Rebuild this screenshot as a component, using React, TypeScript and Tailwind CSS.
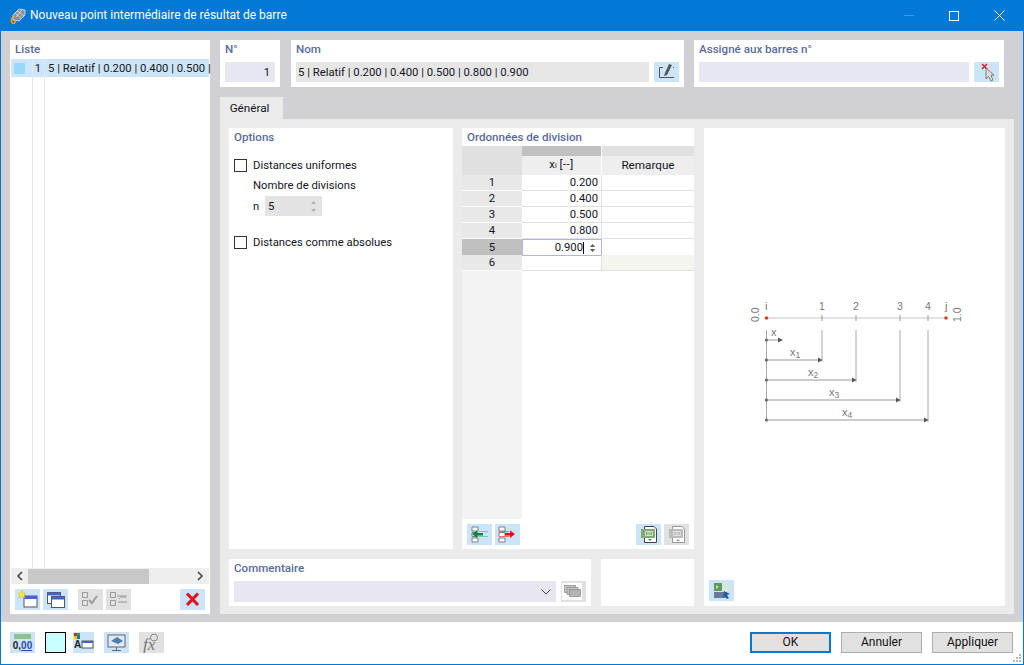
import type { ReactNode } from "react";

const font = "font-['Roboto','Liberation_Sans',sans-serif]";

const rows = [
  { n: 1, v: "0.200" },
  { n: 2, v: "0.400" },
  { n: 3, v: "0.500" },
  { n: 4, v: "0.800" },
];

const Label = ({ children }: { children: ReactNode }) => (
  <p className="text-[11.6px] leading-[16px] font-medium text-[#5b6b9b]">{children}</p>
);

const IconBtn = ({ children, off }: { children: ReactNode; off?: boolean }) => (
  <div className={`w-[25px] h-[21px] flex items-center justify-center shrink-0 ${off ? "bg-[#e1e1e1]" : "bg-[#cce4f7]"}`}>
    <svg width="25" height="21" viewBox="0 0 25 21">{children}</svg>
  </div>
);

const Win = ({ x, y, w = 13, h = 11 }: { x: number; y: number; w?: number; h?: number }) => (
  <g>
    <rect x={x} y={y} width={w} height={h} fill="#fff" stroke="#555" strokeWidth="1" />
    <rect x={x} y={y} width={w} height="3" fill="#4a63c8" />
  </g>
);

const Checkbox = () => <div className="w-[13px] h-[13px] border border-[#333] bg-white shrink-0" />;

const Diagram = () => {
  const ticks = [
    { x: 82, y: 70, l: "1", tx: 50 },
    { x: 116, y: 90, l: "2", tx: 68 },
    { x: 160, y: 110, l: "3", tx: 89 },
    { x: 188, y: 130, l: "4", tx: 102 },
  ];
  return (
    <svg width="230" height="140" viewBox="0 0 230 140" className="font-['Liberation_Sans',sans-serif]">
      <line x1="26" y1="28" x2="206" y2="28" stroke="#c4c4c4" />
      <circle cx="26.5" cy="28" r="1.8" fill="#d8401c" />
      <circle cx="206" cy="28" r="1.8" fill="#d8401c" />
      <text x="25" y="20" fontSize="11" fill="#777">i</text>
      <text x="205" y="20" fontSize="11" fill="#777">j</text>
      <text transform="translate(19 32) rotate(-90)" fontSize="10.5" fill="#777">0.0</text>
      <text transform="translate(221 32) rotate(-90)" fontSize="10.5" fill="#777">1.0</text>
      <line x1="26.5" y1="40" x2="26.5" y2="130" stroke="#aaa" />
      <circle cx="26.5" cy="50" r="1.6" fill="#555" />
      <line x1="26" y1="50" x2="40" y2="50" stroke="#999" />
      <path d="M38 47.5 L43 50 L38 52.5 Z" fill="#555" />
      <text x="31" y="46" fontSize="11" fill="#777">x</text>
      {ticks.map((t) => (
        <g key={t.l}>
          <line x1={t.x} y1="25" x2={t.x} y2="31" stroke="#999" />
          <text x={t.x - 3} y="20" fontSize="10.5" fill="#777">{t.l}</text>
          <line x1={t.x} y1="40" x2={t.x} y2={t.y + 2} stroke="#aaa" />
          <circle cx="26.5" cy={t.y} r="1.6" fill="#555" />
          <line x1="26" y1={t.y} x2={t.x - 3} y2={t.y} stroke="#999" />
          <path d={`M${t.x - 4} ${t.y - 2.5} L${t.x + 0.5} ${t.y} L${t.x - 4} ${t.y + 2.5} Z`} fill="#555" />
          <text x={t.tx} y={t.y - 4} fontSize="11" fill="#777">
            x<tspan fontSize="8.5" dy="2">{t.l}</tspan>
          </text>
        </g>
      ))}
    </svg>
  );
};

export default function App() {
  return (
    <div className={`w-[1024px] h-[665px] flex flex-col bg-white border-x border-b border-[#0078d7] text-[11.3px] leading-[15px] text-[#14141e] overflow-hidden ${font}`}>
      {/* title bar */}
      <div className="h-[31px] bg-[#0078d7] flex items-center shrink-0 text-white">
        <svg width="18" height="18" viewBox="0 0 18 18" className="ml-[8px]">
          <path d="M4 8 L10 2 L16 3 L16 8 L10 14 L4 13 Z" fill="#8a8f98" stroke="#e4e4e4" strokeWidth="0.8" />
          <path d="M6 6 L12 11 M8 4 L15 9 M7 10 L13 3" stroke="#eee" strokeWidth="0.7" />
          <text x="1" y="17" fontSize="10" fontWeight="700" fill="#f0a020">6</text>
        </svg>
        <span className="ml-[3px] text-[12px]">Nouveau point intermédiaire de résultat de barre</span>
        <div className="ml-auto flex items-center">
          <div className="w-[10px] h-px bg-[#3f9be4] mr-[35px]" />
          <div className="w-[10px] h-[10px] border border-white mr-[35px]" />
          <svg width="11" height="11" viewBox="0 0 11 11" className="mr-[18px]">
            <path d="M0.5 0.5 L10.5 10.5 M10.5 0.5 L0.5 10.5" stroke="#fff" strokeWidth="1" />
          </svg>
        </div>
      </div>

      {/* body */}
      <div className="h-[591px] bg-[#d1d0d5] flex gap-[10px] pt-[9px] pl-[9px] pr-[9px] pb-[8px] shrink-0">
        {/* list */}
        <div className="w-[200px] bg-white flex flex-col px-px">
          <div className="pl-[4px] pt-[1px] h-[19px]"><Label>Liste</Label></div>
          <div className="flex-1 relative">
            <div className="h-[18px] bg-[#cce5f8] flex items-center relative">
              <div className="w-[11px] h-[11px] bg-[#97d9f8] ml-[3px] shrink-0" />
              <span className="w-[13px] ml-[3px] text-right shrink-0">1</span>
              <span className="ml-[7px] whitespace-nowrap">5 | Relatif | 0.200 | 0.400 | 0.500 |</span>
            </div>
            <div className="absolute left-[21px] top-0 bottom-0 w-px bg-[#e6e6e6]" />
            <div className="absolute left-[33px] top-0 bottom-0 w-px bg-[#e6e6e6]" />
          </div>
          <div className="h-[16px] bg-[#eeeeee] flex items-center shrink-0">
            <svg width="17" height="16" viewBox="0 0 17 16"><path d="M11 4 L7 8 L11 12" fill="none" stroke="#444" strokeWidth="1.6" /></svg>
            <div className="w-[121px] h-[15px] bg-[#c8c8c8]" />
            <svg width="17" height="16" viewBox="0 0 17 16" className="ml-auto"><path d="M6 4 L10 8 L6 12" fill="none" stroke="#444" strokeWidth="1.6" /></svg>
          </div>
          <div className="h-[30px] flex items-start pt-[5px] pl-[4px] shrink-0">
            <IconBtn>
              <Win x={9} y={7} />
              <path d="M7 1 L8.2 4 L11 4 L9 6 L10 9 L7 7.5 L4 9 L5 6 L3 4 L5.8 4 Z" fill="#ffe92e" stroke="#c9b000" strokeWidth="0.4" />
            </IconBtn>
            <div className="w-[3px]" />
            <IconBtn>
              <Win x={4.5} y={3.5} />
              <Win x={8.5} y={7.5} />
            </IconBtn>
            <div className="w-[10px]" />
            <IconBtn off>
              <path d="M4.5 3.5h5v5h-5z M4.5 11.5h5v5h-5z" fill="none" stroke="#999" />
              <path d="M11 11 L14 14 L19 7" fill="none" stroke="#999" strokeWidth="1.8" />
            </IconBtn>
            <div className="w-[3px]" />
            <IconBtn off>
              <path d="M4.5 3.5h5v5h-5z M4.5 11.5h5v5h-5z" fill="none" stroke="#999" />
              <path d="M11 7 H21 M12 13 H21 M13 10 Q16 6 20 9" fill="none" stroke="#999" />
            </IconBtn>
            <div className="w-[49px]" />
            <IconBtn>
              <path d="M7 4.5 L18 16 M18 4.5 L7 16" stroke="#e8141c" strokeWidth="3.2" />
            </IconBtn>
          </div>
        </div>

        {/* right column */}
        <div className="w-[794px] flex flex-col">
          <div className="flex h-[47px] shrink-0">
            <div className="w-[60px] bg-white pl-[5px] pr-[5px] pt-[1px]">
              <Label>N°</Label>
              <div className="mt-[5px] h-[20px] bg-[#e7e7f1] flex items-center justify-end pr-[5px]">1</div>
            </div>
            <div className="w-[393px] ml-[11px] bg-white pl-[5px] pr-[5px] pt-[1px]">
              <Label>Nom</Label>
              <div className="mt-[5px] flex gap-[5px]">
                <div className="w-[353px] h-[20px] bg-[#e6e6e6] flex items-center pl-[2px] whitespace-nowrap">5 | Relatif | 0.200 | 0.400 | 0.500 | 0.800 | 0.900</div>
                <div className="h-[20px] overflow-hidden">
                  <IconBtn>
                    <path d="M9 5.5 H5.5 V15.5 H20 M20 5.5 H19" fill="none" stroke="#555" />
                    <path d="M15 2 L18 3 L13 13 L10 14 L11 11 Z" fill="#555" />
                  </IconBtn>
                </div>
              </div>
            </div>
            <div className="w-[310px] ml-[10px] bg-white pl-[5px] pr-[5px] pt-[1px]">
              <Label>Assigné aux barres n°</Label>
              <div className="mt-[5px] flex gap-[5px]">
                <div className="w-[270px] h-[20px] bg-[#e7e7f1]" />
                <div className="h-[20px] overflow-hidden">
                  <IconBtn>
                    <path d="M8 2 L13 7 M13 2 L8 7" stroke="#e8141c" strokeWidth="1.5" />
                    <path d="M12 6 L12 17 L14.5 14.5 L17 19 L19 18 L17 13.5 L20 13 Z" fill="#ddd" stroke="#666" strokeWidth="0.8" />
                  </IconBtn>
                </div>
              </div>
            </div>
          </div>

          <div className="mt-[10px] w-[63px] h-[22px] bg-[#ebebeb] flex items-center justify-center shrink-0 text-[11.7px] pr-[4px]">Général</div>

          <div className="flex-1 bg-[#ebebeb] pt-[9px] pl-[9px] pb-[8px] flex gap-[10px]">
            <div className="w-[465px] flex flex-col gap-[10px]">
              <div className="h-[421px] flex gap-[9px]">
                {/* options */}
                <div className="w-[224px] bg-white pl-[5px] pt-[1px]">
                  <Label>Options</Label>
                  <div className="mt-[12px] flex items-center gap-[6px] h-[16px]">
                    <Checkbox />
                    <span>Distances uniformes</span>
                  </div>
                  <p className="mt-[5px] ml-[19px] h-[16px] leading-[16px]">Nombre de divisions</p>
                  <div className="mt-[2px] ml-[19px] flex items-center h-[20px]">
                    <span className="w-[12px]">n</span>
                    <div className="w-[57px] h-[20px] bg-[#e3e3e3] flex items-center pl-[3px] justify-between pr-[5px]">
                      5
                      <svg width="7" height="13" viewBox="0 0 7 13"><path d="M3.5 1 L6 4 H1 Z M3.5 12 L6 9 H1 Z" fill="#b0b0b0" /></svg>
                    </div>
                  </div>
                  <div className="mt-[18px] flex items-center gap-[6px] h-[16px]">
                    <Checkbox />
                    <span>Distances comme absolues</span>
                  </div>
                </div>

                {/* table */}
                <div className="w-[232px] bg-white flex flex-col">
                  <div className="h-[18px] pl-[5px] pt-[1px]"><Label>Ordonnées de division</Label></div>
                  <div className="grid grid-cols-[60px_80px_92px] h-[10px] shrink-0">
                    <div className="bg-[#e0e0e0]" />
                    <div className="bg-[#c0c0c0] border-r border-white" />
                    <div className="bg-[#e0e0e0]" />
                  </div>
                  <div className="grid grid-cols-[60px_80px_92px] h-[19px] shrink-0">
                    <div className="bg-[#e0e0e0]" />
                    <div className="bg-[#eeeeee] border-r border-white flex items-center justify-center">
                      <span>x<span className="text-[7px]">i</span> <span className="tracking-[0.5px]">[--]</span></span>
                    </div>
                    <div className="bg-[#eeeeee] flex items-center justify-center text-[11.7px]">Remarque</div>
                  </div>
                  {rows.map((r) => (
                    <div key={r.n} className="grid grid-cols-[60px_80px_92px] h-[16px] shrink-0">
                      <div className="bg-[#e8e8e8] border-b border-white flex items-center justify-center">{r.n}</div>
                      <div className="border-b border-r border-[#e0e0e0] flex items-center justify-end pr-[3px]">{r.v}</div>
                      <div className="border-b border-[#e0e0e0]" />
                    </div>
                  ))}
                  <div className="grid grid-cols-[60px_80px_92px] h-[16px] shrink-0">
                    <div className="bg-[#c0c0c0] flex items-center justify-center">5</div>
                    <div className="border border-[#a9b4f0] flex items-center justify-end pr-[5px] gap-[3px]">
                      <span>0.900</span>
                      <div className="w-px h-[12px] bg-black -ml-[3px]" />
                      <svg width="7" height="10" viewBox="0 0 7 10" className="ml-[2px]"><path d="M3.5 1 L6 4 H1 Z M3.5 9 L6 6 H1 Z" fill="#555" /></svg>
                    </div>
                    <div className="border-b border-[#e0e0e0]" />
                  </div>
                  <div className="grid grid-cols-[60px_80px_92px] h-[16px] shrink-0">
                    <div className="bg-[#e8e8e8] border-b border-white flex items-center justify-center">6</div>
                    <div className="border-b border-r border-[#e0e0e0]" />
                    <div className="bg-[#f5f5ef] border-b border-[#e0e0e0]" />
                  </div>
                  <div className="flex-1 min-h-0">
                    <div className="w-[60px] h-full bg-[#f3f3f3]" />
                  </div>
                  <div className="h-[30px] flex items-start pt-[5px] px-[5px] shrink-0">
                    <IconBtn>
                      <path d="M5 3h6v4H5z M5 8.5h6v4H5z M5 14h6v4H5z" fill="#fff" stroke="#666" strokeWidth="0.8" />
                      <path d="M12 7.5 H21 M12 12.5 H21" stroke="#6fcfa0" />
                      <path d="M5 10 L10 6.5 V9 H16 V11.5 H10 V14 Z" fill="#0a8a3c" />
                    </IconBtn>
                    <div className="w-[3px]" />
                    <IconBtn>
                      <path d="M4 3h6v4H4z M4 8.5h6v4H4z M4 14h6v4H4z" fill="#fff" stroke="#666" strokeWidth="0.8" />
                      <path d="M4 7.5 H14 M4 12.5 H14" stroke="#e87070" />
                      <path d="M20 10 L15 6.5 V9 H10 V11.5 H15 V14 Z" fill="#f00" />
                    </IconBtn>
                    <div className="ml-auto flex gap-[3px]">
                      <IconBtn>
                        <path d="M8.5 2.5 H18 L20.5 5 V18.5 H8.5 Z" fill="#fff" stroke="#444" />
                        <rect x="5" y="5" width="14" height="9" fill="#86a878" />
                        <path d="M9.5 7.5h7v4h-7z M12 7.5v4 M14 7.5v4" fill="none" stroke="#dfe" strokeWidth="0.7" />
                        <path d="M12 15 H16 L14 17 Z" fill="#4a8a4a" />
                      </IconBtn>
                      <IconBtn off>
                        <path d="M8.5 2.5 H18 L20.5 5 V18.5 H8.5 Z" fill="#fff" stroke="#999" />
                        <rect x="5" y="5" width="14" height="9" fill="#bbb" />
                        <path d="M9.5 7.5h7v4h-7z M12 7.5v4 M14 7.5v4" fill="none" stroke="#eee" strokeWidth="0.7" />
                        <path d="M12 17 H16 L14 15 Z" fill="#999" />
                      </IconBtn>
                    </div>
                  </div>
                </div>
              </div>

              <div className="h-[47px] flex gap-[10px]">
                <div className="w-[362px] bg-white pl-[5px] pr-[5px] pt-[1px]">
                  <Label>Commentaire</Label>
                  <div className="mt-[5px] flex gap-[5px]">
                    <div className="w-[322px] h-[21px] bg-[#e7e7f1] flex items-center justify-end pr-[4px]">
                      <svg width="12" height="8" viewBox="0 0 12 8"><path d="M1.5 1.5 L6 6 L10.5 1.5" fill="none" stroke="#444" /></svg>
                    </div>
                    <IconBtn off>
                      <rect x="1" y="2" width="20" height="17" fill="#fff" />
                      <rect x="3.5" y="4.5" width="11" height="7" fill="#c4c4c4" stroke="#888" strokeWidth="0.7" />
                      <rect x="6" y="6.5" width="11" height="7" fill="#c4c4c4" stroke="#888" strokeWidth="0.7" />
                      <rect x="8.5" y="8.5" width="11" height="7" fill="#b5b5b5" stroke="#888" strokeWidth="0.7" />
                    </IconBtn>
                  </div>
                </div>
                <div className="w-[93px] bg-white" />
              </div>
            </div>

            {/* preview */}
            <div className="w-[301px] bg-white flex flex-col pl-[5px] pb-[5px]">
              <div className="pl-[31px] pt-[162px]"><Diagram /></div>
              <div className="mt-auto">
                <IconBtn>
                  <rect x="5" y="3" width="13" height="8" fill="#5a9a6a" />
                  <path d="M7 5 L10 7 L7 9 Z" fill="#e8e030" />
                  <rect x="13" y="3" width="7" height="8" fill="#d8e8d8" />
                  <rect x="5" y="12" width="13" height="6" fill="#6a7a9a" />
                  <path d="M15 11 L21 14 L18 15 L20 18 L18 19 L16 16 L14 18 Z" fill="#2a5aa0" />
                </IconBtn>
              </div>
            </div>
          </div>
        </div>
      </div>

      {/* footer */}
      <div className="flex-1 relative flex items-center pl-[9px] pb-[1px]">
        <IconBtn>
          <rect x="4" y="2" width="17" height="5" fill="#8fc08f" />
          <text x="12.5" y="17" textAnchor="middle" fontSize="10" fontWeight="700" fill="#222" fontFamily="Liberation Sans, sans-serif">0,<tspan fill="#2a4ab0" textDecoration="underline">00</tspan></text>
        </IconBtn>
        <div className="w-[21px] h-[21px] ml-[10px] bg-[#c8ffff] border border-black shrink-0" />
        <div className="w-[21px] h-[21px] ml-[7px] bg-[#cce4f7] shrink-0 overflow-hidden">
          <svg width="21" height="21" viewBox="0 0 21 21">
            <rect x="1" y="1" width="3" height="3" fill="#d22" />
            <rect x="4" y="1" width="3" height="3" fill="#2a2" />
            <rect x="1" y="4" width="3" height="3" fill="#ec2" />
            <rect x="4" y="4" width="3" height="3" fill="#26c" />
            <text x="1" y="16" fontSize="10" fontWeight="700" fill="#222" fontFamily="Liberation Sans, sans-serif">A</text>
            <rect x="9" y="9" width="11" height="7" fill="#fff" stroke="#555" />
            <rect x="9" y="9" width="11" height="2" fill="#4a63c8" />
          </svg>
        </div>
        <div className="ml-[10px]">
          <IconBtn>
            <rect x="4" y="3" width="17" height="12" fill="#dfeaf3" stroke="#667" />
            <path d="M7 9 L13 5 L19 9 L14 12 Z" fill="#4d7fa8" />
            <path d="M12.5 15 V18 M8 18.5 H17" stroke="#667" />
          </IconBtn>
        </div>
        <div className="ml-[10px]">
          <IconBtn off>
            <text x="4" y="18" fontSize="17" fontStyle="italic" fill="#777" fontFamily="Liberation Serif, serif">fx</text>
            <circle cx="15" cy="5.5" r="3.5" fill="none" stroke="#888" />
          </IconBtn>
        </div>
        <div className="ml-auto flex gap-[10px] pr-[10px] text-[12px]">
          <button className="w-[81px] h-[21px] bg-[#e1e1e1] border-2 border-[#0078d7] text-[#111]">OK</button>
          <button className="w-[81px] h-[21px] bg-[#e1e1e1] border border-[#adadad] text-[#111]">Annuler</button>
          <button className="w-[81px] h-[21px] bg-[#e1e1e1] border border-[#adadad] text-[#111]">Appliquer</button>
        </div>
        <svg width="9" height="9" viewBox="0 0 9 9" className="absolute right-[1px] bottom-[1px]">
          <path d="M6 0h2v2H6z M3 3h2v2H3z M6 3h2v2H6z M0 6h2v2H0z M3 6h2v2H3z M6 6h2v2H6z" fill="#b8b8b8" />
        </svg>
      </div>
    </div>
  );
}
